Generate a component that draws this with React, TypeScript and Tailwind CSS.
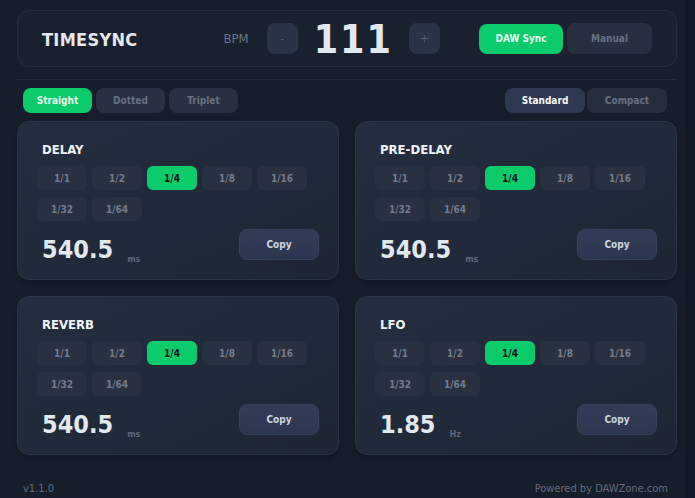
import React from "react";

const fractions = ["1/1", "1/2", "1/4", "1/8", "1/16", "1/32", "1/64"];

function Card({ title, value, unit }: { title: string; value: string; unit: string }) {
  return (
    <div className="h-[159px] rounded-[12px] border border-[#2a3447] bg-gradient-to-br from-[#242e40] to-[#1e2635] px-[19px] pt-[20px] shadow-[0_4px_10px_rgba(0,0,0,0.25)]">
      <div className="pl-[5px] text-[13px] font-bold leading-[16px] text-[#f1f5f9]">{title}</div>
      <div className="mt-[8px] flex w-[275px] flex-wrap gap-x-[5px] gap-y-[7px]">
        {fractions.map((f) => (
          <div
            key={f}
            className={
              f === "1/4"
                ? "flex h-[24px] w-[50px] items-center justify-center rounded-[6px] bg-[#0bcb6b] text-[10px] font-bold text-[#0b1220]"
                : "flex h-[24px] w-[50px] items-center justify-center rounded-[6px] bg-[#283041] text-[10px] font-bold text-[#737b8d]"
            }
          >
            {f}
          </div>
        ))}
      </div>
      <div className="mt-[8px] flex items-start justify-between">
        <div className="flex items-end pl-[5px] pt-[7px]">
          <span className="text-[25px] font-bold leading-[28px] text-[#e2e8f0]">{value}</span>
          <span className="mb-[-1px] ml-[14px] text-[9px] font-bold leading-[12px] text-[#5d6679]">{unit}</span>
        </div>
        <div className="flex h-[31px] w-[80px] items-center justify-center rounded-[8px] border border-[#36405a] bg-gradient-to-b from-[#323c56] to-[#2c3650] text-[10px] font-bold text-[#cbd5e1]">
          Copy
        </div>
      </div>
    </div>
  );
}

export default function App() {
  return (
    <div className="flex h-[498px] w-[695px] bg-[#171e2b] font-['DejaVu_Sans_Condensed','DejaVu_Sans',sans-serif]">
      <div className="flex w-[685px] flex-col pl-[17px] pr-[8px] pt-[10px]">
        <div className="flex h-[57px] items-center rounded-[12px] border border-[#242d3d] bg-[#192130] pl-[24px] pr-[24px]">
          <div className="pt-[2px] text-[18px] font-bold tracking-[0.3px] text-[#e5e7eb]">TIMESYNC</div>
          <div className="ml-[86px] flex items-center">
            <span className="text-[13px] text-[#6b7385]">BPM</span>
            <div className="ml-[18px] flex h-[31px] w-[31px] items-center justify-center rounded-[8px] bg-[#2b3346] text-[12px] text-[#4f586b]">-</div>
            <span className="mx-[16px] pt-[2px] text-[39px] font-bold leading-[40px] tracking-[2px] text-[#e2e8f0]">111</span>
            <div className="flex h-[31px] w-[31px] items-center justify-center rounded-[8px] bg-[#2b3346] text-[13px] text-[#4f586b]">+</div>
          </div>
          <div className="ml-auto flex items-center gap-[4px]">
            <div className="flex h-[30px] w-[84px] items-center justify-center rounded-[8px] bg-[#0bcb6b] text-[10px] font-bold text-[#e6fff0]">DAW Sync</div>
            <div className="flex h-[31px] w-[85px] items-center justify-center rounded-[8px] bg-[#282f40] text-[10px] font-bold text-[#687083]">Manual</div>
          </div>
        </div>
        <div className="mt-[12px] h-px bg-[#222b3a]" />
        <div className="mt-[8px] flex items-center justify-between pl-[6px] pr-[10px]">
          <div className="flex gap-[4px]">
            <div className="flex h-[25px] w-[69px] items-center justify-center rounded-[8px] bg-[#0bcb6b] text-[10px] font-bold text-[#e6fff0]">Straight</div>
            <div className="flex h-[25px] w-[69px] items-center justify-center rounded-[8px] bg-[#283041] text-[10px] font-bold text-[#687083]">Dotted</div>
            <div className="flex h-[25px] w-[69px] items-center justify-center rounded-[8px] bg-[#283041] text-[10px] font-bold text-[#687083]">Triplet</div>
          </div>
          <div className="flex gap-[2px]">
            <div className="flex h-[25px] w-[80px] items-center justify-center rounded-[8px] bg-[#2e3850] text-[10px] font-bold text-[#f8fafc]">Standard</div>
            <div className="flex h-[25px] w-[80px] items-center justify-center rounded-[8px] bg-[#262e3e] text-[10px] font-bold text-[#687083]">Compact</div>
          </div>
        </div>
        <div className="mt-[8px] grid grid-cols-2 gap-x-[16px] gap-y-[16px]">
          <Card title="DELAY" value="540.5" unit="ms" />
          <Card title="PRE-DELAY" value="540.5" unit="ms" />
          <Card title="REVERB" value="540.5" unit="ms" />
          <Card title="LFO" value="1.85" unit="Hz" />
        </div>
        <div className="mt-[26px] flex items-center justify-between pl-[6px] pr-[9px] text-[11px] text-[#636b7c]">
          <span>v1.1.0</span>
          <span>Powered by DAWZone.com</span>
        </div>
      </div>
      <div className="w-[10px] bg-[#121823]" />
    </div>
  );
}
